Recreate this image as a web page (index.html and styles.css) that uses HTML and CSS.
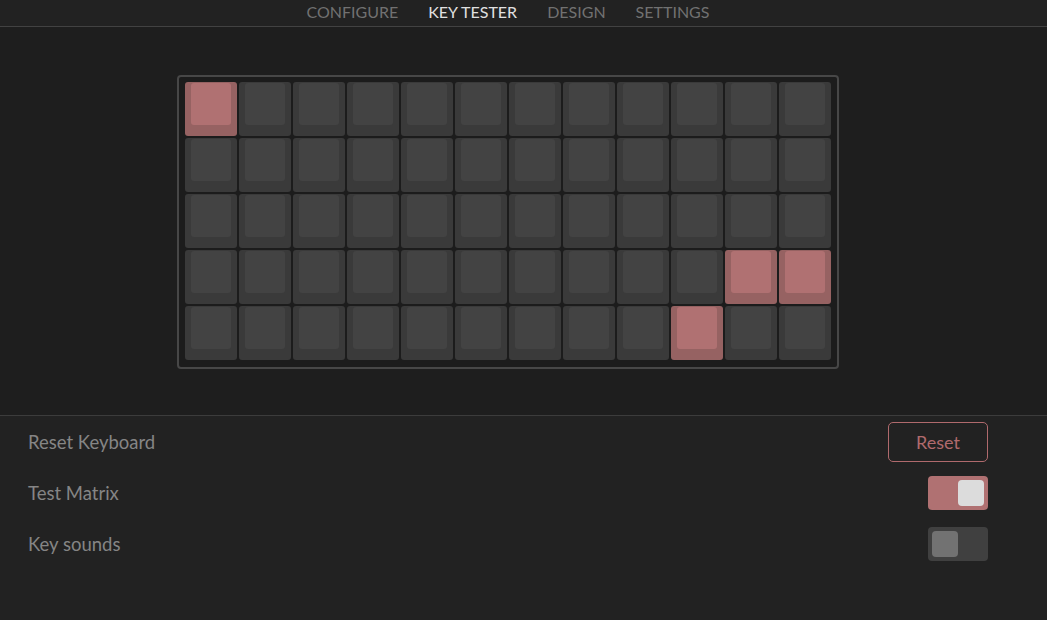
FILE: index.html
```html
<!DOCTYPE html>
<html lang="en">
<head>
	<meta charset="UTF-8">
	<title>Key Tester</title>
	<link rel="stylesheet" href="styles.css">
</head>
<body>
	<div class="app">
		<nav class="menu">
			<span class="menu-item">CONFIGURE</span>
			<span class="menu-item active">KEY TESTER</span>
			<span class="menu-item">DESIGN</span>
			<span class="menu-item">SETTINGS</span>
		</nav>
		<div class="stage">
			<div class="board" id="board"></div>
		</div>
		<div class="panel">
			<div class="row">
				<span class="label">Reset Keyboard</span>
				<button class="btn-reset">Reset</button>
			</div>
			<div class="row">
				<span class="label">Test Matrix</span>
				<span class="toggle on"><span class="knob"></span></span>
			</div>
			<div class="row">
				<span class="label">Key sounds</span>
				<span class="toggle"><span class="knob"></span></span>
			</div>
		</div>
	</div>
	<script>
		// 按下过的键：行,列
		var pressed = ["0,0", "3,10", "3,11", "4,9"];
		var board = document.getElementById('board');
		for (var r = 0; r < 5; r++) {
			for (var c = 0; c < 12; c++) {
				var key = document.createElement('div');
				key.className = 'key';
				if (pressed.indexOf(r + ',' + c) > -1) key.className += ' hit';
				key.innerHTML = '<span class="cap"></span>';
				board.appendChild(key);
			}
		}
	</script>
</body>
</html>
```

FILE: styles.css
```css
*{
	box-sizing: border-box;
}
body{
	margin: 0;
	background-color: #222;
	font-family: "Source Sans Pro", Lato, "Noto Sans", sans-serif;
	color: #888;
}
.app{
	height: 620px;
	display: flex;
	flex-direction: column;
}
.menu{
	height: 27px;
	display: flex;
	justify-content: center;
	gap: 30px;
	padding-right: 31px;
	border-bottom: 1px solid #424242;
	background-color: #222;
}
.menu-item{
	font-size: 16px;
	line-height: 24px;
	color: #717171;
}
.menu-item.active{
	color: #e0e0e0;
}
.stage{
	height: 389px;
	display: flex;
	align-items: center;
	justify-content: center;
	padding: 2px 31px 0 0;
	background-color: #1e1e1e;
	border-bottom: 1px solid #3c3c3c;
}
.board{
	display: grid;
	grid-template-columns: repeat(12, 52px);
	grid-auto-rows: 54px;
	gap: 2px;
	padding: 5px 6px 7px;
	border: 2px solid #474747;
	border-radius: 4px;
	background-color: #1c1c1c;
}
.key{
	background-color: #3a3a3a;
	border-radius: 3px;
	padding: 1px 6px 11px;
	display: flex;
}
.cap{
	flex: 1;
	background-color: #434343;
	border-radius: 3px;
}
.key.hit{
	background-color: #966262;
}
.key.hit .cap{
	background-color: #b07172;
}
.panel{
	flex: 1;
	padding: 0 59px 0 28px;
}
.row{
	height: 51px;
	display: flex;
	align-items: center;
	justify-content: space-between;
}
.label{
	font-size: 18.5px;
	color: #858585;
}
.btn-reset{
	width: 100px;
	height: 40px;
	border: 1px solid #b06a6d;
	border-radius: 5px;
	background: transparent;
	color: #b06a6d;
	font-family: inherit;
	font-size: 18px;
	cursor: pointer;
}
.toggle{
	width: 60px;
	height: 34px;
	border-radius: 4px;
	background-color: #404040;
	padding: 4px;
	display: flex;
}
.toggle .knob{
	width: 26px;
	height: 26px;
	border-radius: 4px;
	background-color: #727272;
}
.toggle.on{
	background-color: #b07172;
	justify-content: flex-end;
}
.toggle.on .knob{
	background-color: #dcdcdc;
}
```
